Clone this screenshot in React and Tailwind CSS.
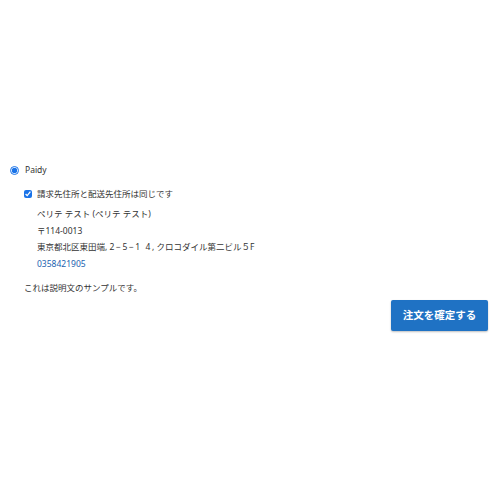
import React from "react";

const font = { fontFamily: '"Noto Sans", "Noto Sans CJK JP", sans-serif' };

export default function App() {
  return (
    <div className="min-h-[500px] bg-white text-[#333] pt-[164px] pl-[10px] pr-[12px]" style={font}>
      {/* Payment method */}
      <label className="flex items-center gap-[6px] h-[12px] text-[8.5px]">
        <input type="radio" defaultChecked className="w-[9px] h-[9px] m-0 accent-[#1a73e8]" />
        <span>Paidy</span>
      </label>

      <div className="pl-[14px] mt-[12px]">
        <label className="flex items-center gap-[5px] h-[12px] text-[8.5px]">
          <input type="checkbox" defaultChecked className="w-[8px] h-[8px] m-0 accent-[#1a73e8]" />
          <span>請求先住所と配送先住所は同じです</span>
        </label>

        {/* Address */}
        <div className="pl-[13px] mt-[6px] flex flex-col text-[8.5px] leading-[16.6px]">
          <span>ペリテ テスト (ペリテ テスト)</span>
          <span>〒114-0013</span>
          <span>
            東京都北区東田端, <span className="tracking-[1.6px]">2−5−1 4</span>, クロコダイル第二ビル５F
          </span>
          <span className="text-[#1a62b0]">0358421905</span>
        </div>
      </div>

      <p className="pl-[14px] mt-[10px] text-[8.5px] leading-[12px]">これは説明文のサンプルです。</p>

      <div className="flex justify-end mt-[6px]">
        <button className="w-[97px] h-[31px] rounded-[2px] bg-[#1f72c4] text-white font-bold text-[10.5px] shadow-[0_1px_2px_rgba(0,0,0,0.25)]">
          注文を確定する
        </button>
      </div>
    </div>
  );
}
